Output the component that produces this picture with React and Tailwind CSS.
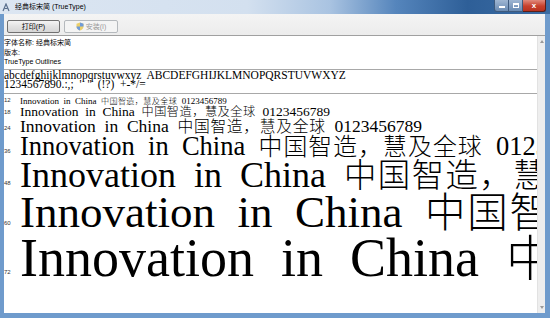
import React from "react";

const serif = { fontFamily: '"Liberation Serif", "Noto Sans CJK SC", serif' };
const sans = { fontFamily: '"Liberation Sans", "Noto Sans CJK SC", sans-serif' };

function Row({ label, rowCls, textCls }) {
  return (
    <div className={"flex items-baseline whitespace-nowrap " + rowCls}>
      <span className="w-[16px] shrink-0 text-[6px] text-[#333] -translate-y-[2px]" style={sans}>
        {label}
      </span>
      <span className={"[word-spacing:0.25em] text-black " + textCls} style={serif}>
        Innovation in China{" "}
        <span className="text-[0.9em] tracking-[0.045em] font-light">中国智造，慧及全球</span> 0123456789
      </span>
    </div>
  );
}

function FontIcon() {
  return (
    <svg width="8" height="9" viewBox="0 0 8 9">
      <path d="M1 8 L4 1 L7 8" fill="none" stroke="#5a6f8c" strokeWidth="1.2" />
      <path d="M2.3 5.5 H5.7" stroke="#5a6f8c" strokeWidth="1" />
    </svg>
  );
}

function Shield() {
  return (
    <svg width="8" height="9" viewBox="0 0 8 9" className="opacity-80">
      <path d="M4 0.5 L7.5 1.8 V4.5 C7.5 6.6 5.8 7.9 4 8.6 C2.2 7.9 0.5 6.6 0.5 4.5 V1.8 Z" fill="#e9c64a" />
      <path d="M4 0.5 L7.5 1.8 V4.5 H4 Z" fill="#4f86d4" />
      <path d="M4 4.5 H0.5 C0.5 6.6 2.2 7.9 4 8.6 Z" fill="#4f86d4" />
    </svg>
  );
}

export default function App() {
  return (
    <div className="w-[550px] h-[318px] overflow-hidden flex flex-col bg-[#6f9bcc]" style={sans}>
      {/* Title bar */}
      <div className="h-[14px] shrink-0 flex items-start bg-[linear-gradient(90deg,#dce6f2_0%,#d3e0ef_45%,#a9c3e1_60%,#5585bc_72%,#2e5f98_85%,#3b6ca3_100%)]">
        <div className="pl-[2px] pt-[3px]">
          <FontIcon />
        </div>
        <div className="pl-[5px] pt-[2px] text-[7px] leading-[10px] text-black">经典标宋简 (TrueType)</div>
        <div className="ml-auto mr-[4px] flex items-start">
          <div className="w-[15px] h-[12px] rounded-bl-[3px] border border-t-0 border-[#3e5a7d] bg-[linear-gradient(#9fb6d2,#6a8bb3)] flex items-center justify-center">
            <div className="w-[6px] h-[2px] bg-white mt-[3px]" />
          </div>
          <div className="w-[14px] h-[12px] border border-t-0 border-l-0 border-[#3e5a7d] bg-[linear-gradient(#9fb6d2,#6a8bb3)] flex items-center justify-center">
            <div className="w-[6px] h-[5px] border border-white border-t-2" />
          </div>
          <div className="w-[23px] h-[12px] rounded-br-[3px] border border-t-0 border-l-0 border-[#5a1f1a] bg-[linear-gradient(#e08a7c,#c7402c_55%,#b8321f)] flex items-center justify-center text-white text-[8px] font-bold leading-none">
            x
          </div>
        </div>
      </div>

      {/* Client */}
      <div className="flex-1 flex flex-col ml-[4px] mr-[5px] mb-[5px] min-h-0">
        {/* Toolbar */}
        <div className="h-[22px] shrink-0 bg-[linear-gradient(#f4f4f4,#ececec)] border-b border-[#a0a0a0] flex items-start pt-[6px] pl-[3px] gap-[4px]">
          <div className="w-[53px] h-[13px] rounded-[2px] border border-[#707070] bg-[linear-gradient(#f4f4f4,#e2e2e2_50%,#d6d6d6)] flex items-center justify-center text-[7px] leading-none text-black">
            打印(P)
          </div>
          <div className="w-[54px] h-[13px] rounded-[2px] border border-[#b5b9bd] bg-[#f4f4f4] flex items-center justify-center gap-[2px] text-[7px] leading-none text-[#9a9a9a]">
            <Shield />
            <span>安装(I)</span>
          </div>
        </div>

        {/* Content + scrollbar */}
        <div className="flex-1 flex min-h-0">
          <div className="flex-1 bg-white overflow-hidden flex flex-col">
            <div className="pt-[2px] pb-[2px] border-b border-[#a8a8a8] text-[7px] leading-[9.5px] text-black">
              <div>字体名称: 经典标宋简</div>
              <div>版本:</div>
              <div>TrueType Outlines</div>
            </div>
            <div className="pt-[1px] pb-[3px] border-b border-[#a8a8a8] text-[11.5px] leading-[9.5px] text-black whitespace-nowrap [word-spacing:0.25em]" style={serif}>
              <div>abcdefghijklmnopqrstuvwxyz ABCDEFGHIJKLMNOPQRSTUVWXYZ</div>
              <div>1234567890.:,; ' " (!?) +-*/=</div>
            </div>
            <div className="pt-[2px] flex flex-col">
              <Row label="12" rowCls="h-[10px] leading-[10px]" textCls="text-[9px]" />
              <Row label="18" rowCls="h-[11px] leading-[11px]" textCls="text-[13.5px]" />
              <Row label="24" rowCls="h-[18px] leading-[18px]" textCls="text-[17.5px]" />
              <Row label="36" rowCls="h-[22px] leading-[22px]" textCls="text-[26.5px]" />
              <Row label="48" rowCls="h-[36px] leading-[36px]" textCls="text-[36px]" />
              <Row label="60" rowCls="h-[38px] leading-[38px]" textCls="text-[45px]" />
              <Row label="72" rowCls="h-[55px] leading-[55px]" textCls="text-[54px]" />
            </div>
          </div>
          <div className="w-[8px] shrink-0 bg-[#eeeeee] border-l border-[#e2e2e2] flex flex-col items-center justify-between py-[4px]">
            <svg width="4" height="3" viewBox="0 0 4 3"><path d="M0 3 L2 0 L4 3 Z" fill="#9a9a9a" /></svg>
            <svg width="4" height="3" viewBox="0 0 4 3"><path d="M0 0 L2 3 L4 0 Z" fill="#9a9a9a" /></svg>
          </div>
        </div>
      </div>
    </div>
  );
}
